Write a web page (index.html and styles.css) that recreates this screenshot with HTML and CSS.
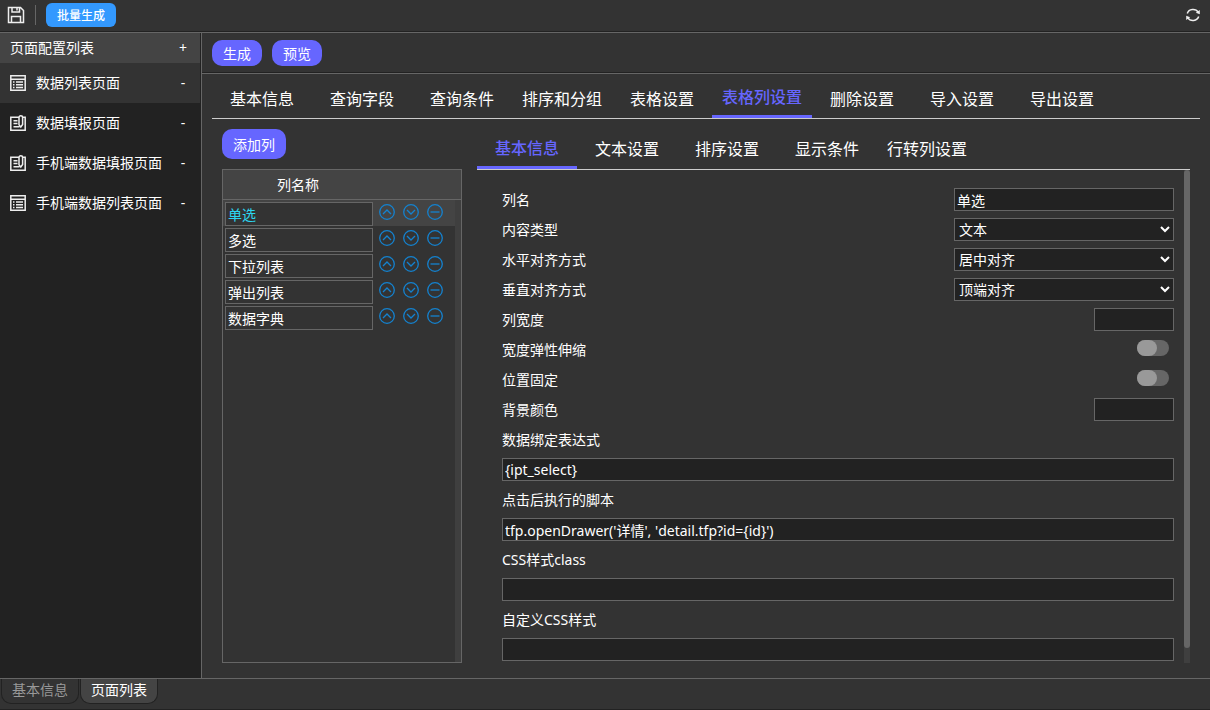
FILE: index.html
```html
<!DOCTYPE html>
<html lang="zh-CN">
<head>
<meta charset="utf-8">
<title>页面列表</title>
<link rel="stylesheet" href="styles.css">
</head>
<body>
<svg class="sprite" aria-hidden="true">
  <symbol id="i-list" viewBox="0 0 16 16"><path d="M.8.8h14.400v14.400H.8zM1 4.200h14M3 7h1.500M6 7h7M3 9.700h1.500M6 9.700h7M3 12.400h1.500M6 12.400h7"/></symbol>
  <symbol id="i-form" viewBox="0 0 16 16"><path d="M8.500 2.300H.8v12.900h14.400V2.300h-2M3.500 5.800h4M3.500 8.500h4M3.500 11.700h6M9 10V2.500Q9 .8 10.800.8T12.600 2.500V9.500L10.800 12L9 10"/></symbol>
  <symbol id="i-up" viewBox="0 0 16 16"><circle cx="8" cy="8" r="7.300"/><path d="M4 10l4-4 4 4"/></symbol>
  <symbol id="i-down" viewBox="0 0 16 16"><circle cx="8" cy="8" r="7.300"/><path d="M4 6l4 4 4-4"/></symbol>
  <symbol id="i-minus" viewBox="0 0 16 16"><circle cx="8" cy="8" r="7.300"/><path d="M3.500 8h9"/></symbol>
</svg>
<header class="topbar">
  <button class="icon-btn save" aria-label="保存"><svg viewBox="0 0 18 18"><path d="M1.500 1.500h12l3 3v12h-15zM5 1.500v4.500h7.500v-4.500M10 2v2.500M4.500 16.500v-6h9v6"/></svg></button>
  <span class="divider"></span>
  <button class="batch">批量生成</button>
  <button class="icon-btn refresh" aria-label="刷新"><svg viewBox="0 0 16 16"><path d="M2.300 6.500a6 5.500 0 0 1 10.900-1.300M13.700 9.500a6 5.500 0 0 1-10.900 1.300"/><path class="solid" d="M14.800 3v4.200l-4-1.400zM1.200 13V8.800l4 1.400z"/></svg></button>
</header>
<div class="body">
  <aside class="sidebar">
    <div class="side-head"><span>页面配置列表</span><button class="mark" aria-label="添加页面">+</button></div>
    <ul class="pages">
      <li class="page current"><svg class="page-icon"><use href="#i-list"/></svg><a href="#">数据列表页面</a><button class="mark">-</button></li>
      <li class="page"><svg class="page-icon"><use href="#i-form"/></svg><a href="#">数据填报页面</a><button class="mark">-</button></li>
      <li class="page"><svg class="page-icon"><use href="#i-form"/></svg><a href="#">手机端数据填报页面</a><button class="mark">-</button></li>
      <li class="page"><svg class="page-icon"><use href="#i-list"/></svg><a href="#">手机端数据列表页面</a><button class="mark">-</button></li>
    </ul>
  </aside>
  <main class="main">
    <div class="actions"><button class="pill">生成</button><button class="pill">预览</button></div>
    <div class="content">
      <nav class="tabs">
        <button class="tab">基本信息</button><button class="tab">查询字段</button><button class="tab">查询条件</button><button class="tab">排序和分组</button><button class="tab">表格设置</button><button class="tab active">表格列设置</button><button class="tab">删除设置</button><button class="tab">导入设置</button><button class="tab">导出设置</button>
      </nav>
      <div class="columns">
        <section class="left">
          <button class="pill add">添加列</button>
          <div class="col-panel">
            <div class="col-head"><span>列名称</span></div>
            <ul class="col-list">
              <li class="col selected"><input aria-label="列名称" value="单选"><button aria-label="上移"><svg><use href="#i-up"/></svg></button><button aria-label="下移"><svg><use href="#i-down"/></svg></button><button aria-label="删除"><svg><use href="#i-minus"/></svg></button></li>
              <li class="col"><input aria-label="列名称" value="多选"><button aria-label="上移"><svg><use href="#i-up"/></svg></button><button aria-label="下移"><svg><use href="#i-down"/></svg></button><button aria-label="删除"><svg><use href="#i-minus"/></svg></button></li>
              <li class="col"><input aria-label="列名称" value="下拉列表"><button aria-label="上移"><svg><use href="#i-up"/></svg></button><button aria-label="下移"><svg><use href="#i-down"/></svg></button><button aria-label="删除"><svg><use href="#i-minus"/></svg></button></li>
              <li class="col"><input aria-label="列名称" value="弹出列表"><button aria-label="上移"><svg><use href="#i-up"/></svg></button><button aria-label="下移"><svg><use href="#i-down"/></svg></button><button aria-label="删除"><svg><use href="#i-minus"/></svg></button></li>
              <li class="col"><input aria-label="列名称" value="数据字典"><button aria-label="上移"><svg><use href="#i-up"/></svg></button><button aria-label="下移"><svg><use href="#i-down"/></svg></button><button aria-label="删除"><svg><use href="#i-minus"/></svg></button></li>
            </ul>
          </div>
        </section>
        <section class="right">
          <nav class="tabs sub">
            <button class="tab active">基本信息</button><button class="tab">文本设置</button><button class="tab">排序设置</button><button class="tab">显示条件</button><button class="tab">行转列设置</button>
          </nav>
          <div class="form-wrap">
            <form class="form">
              <div class="row"><label for="name">列名</label><input class="field" id="name" value="单选"></div>
              <div class="row"><label for="type">内容类型</label><select class="field" id="type"><option>文本</option></select></div>
              <div class="row"><label for="halign">水平对齐方式</label><select class="field" id="halign"><option>居中对齐</option></select></div>
              <div class="row"><label for="valign">垂直对齐方式</label><select class="field" id="valign"><option>顶端对齐</option></select></div>
              <div class="row"><label for="width">列宽度</label><input class="field short" id="width"></div>
              <div class="row"><label for="flex">宽度弹性伸缩</label><input class="toggle" type="checkbox" id="flex"></div>
              <div class="row"><label for="fixed">位置固定</label><input class="toggle" type="checkbox" id="fixed"></div>
              <div class="row"><label for="bg">背景颜色</label><input class="field short" id="bg"></div>
              <div class="row"><label for="bind">数据绑定表达式</label></div>
              <div class="row"><input class="field wide" id="bind" value="{ipt_select}"></div>
              <div class="row"><label for="script">点击后执行的脚本</label></div>
              <div class="row"><input class="field wide" id="script" value="tfp.openDrawer('详情', 'detail.tfp?id={id}')"></div>
              <div class="row"><label for="cls">CSS样式class</label></div>
              <div class="row"><input class="field wide" id="cls"></div>
              <div class="row"><label for="css">自定义CSS样式</label></div>
              <div class="row"><input class="field wide" id="css"></div>
            </form>
            <div class="track"><div class="thumb"></div></div>
          </div>
        </section>
      </div>
    </div>
  </main>
</div>
<footer class="footer"><button class="foot-tab">基本信息</button><button class="foot-tab active">页面列表</button></footer>
</body>
</html>
```
FILE: styles.css
```css
* { box-sizing: border-box; }

body {
  margin: 0;
  height: 100vh;
  display: flex;
  flex-direction: column;
  overflow: hidden;
  background: #333;
  color: #fff;
  font: 14px/20px "Noto Sans", "Noto Sans CJK SC", sans-serif;
}

button, input, select { font: inherit; color: inherit; }
button { margin: 0; padding: 0; border: 0; background: none; cursor: pointer; }
ul { margin: 0; padding: 0; list-style: none; }
a { color: inherit; text-decoration: none; }
svg { display: block; fill: none; stroke: currentColor; }
.sprite { position: absolute; width: 0; height: 0; }

/* top bar */
.topbar {
  display: flex;
  align-items: center;
  height: 33px;
  padding: 0 9px 2px 7px;
  border-bottom: 1px solid #666;
  box-shadow: inset 0 -1px #222;
}
.icon-btn { color: #eee; }
.save svg { width: 18px; height: 18px; stroke-width: 1.5; }
.divider { width: 1px; height: 20px; margin: 0 10px; background: #666; }
.batch {
  width: 70px;
  height: 24px;
  padding-top: 2px;
  border-radius: 6px;
  background: #39f;
  font-size: 12px;
  font-weight: 500;
}
.refresh { margin-left: auto; }
.refresh svg { width: 16px; height: 16px; stroke-width: 1.5; }
.refresh .solid { fill: currentColor; stroke: none; }

.body { flex: 1; display: flex; min-height: 0; }

/* sidebar */
.sidebar {
  flex: none;
  width: 202px;
  border-right: 1px solid #666;
  padding-right: 1px;
  background: #222;
}
.side-head {
  display: flex;
  align-items: center;
  justify-content: space-between;
  height: 30px;
  padding: 0 10px;
  background: #444;
}
.page {
  display: flex;
  align-items: center;
  gap: 10px;
  height: 40px;
  padding: 0 10px;
}
.page.current { background: #333; }
.page-icon { width: 16px; height: 16px; color: #eee; stroke-width: 1.5; }
.page a { flex: 1; }
.mark { width: 14px; text-align: center; }

/* main area */
.main { flex: 1; display: flex; flex-direction: column; min-width: 0; }
.actions {
  display: flex;
  gap: 10px;
  height: 41px;
  padding: 7px 10px;
  border-bottom: 1px solid #666;
  box-shadow: inset 0 -1px #222;
}
.pill {
  width: 50px;
  height: 26px;
  padding-top: 1px;
  border-radius: 10px;
  background: #66f;
}
.pill.add { flex: none; width: 64px; height: 30px; }
.content {
  flex: 1;
  display: flex;
  flex-direction: column;
  min-height: 0;
  padding: 5px 10px 15px;
}
.tabs { flex: none; display: flex; height: 40px; border-bottom: 1px solid #ccc; }
.tabs.sub { height: 41px; }
.tab { width: 100px; font-size: 16px; }
.tab.active { border-bottom: 3px solid #66f; color: #66f; font-weight: 500; }

.columns {
  flex: 1;
  display: flex;
  gap: 15px;
  min-height: 0;
  padding: 10px 10px 0;
}
.left { flex: none; display: flex; flex-direction: column; gap: 10px; width: 240px; }
.col-panel {
  flex: 1;
  display: flex;
  flex-direction: column;
  border: 1px solid #666;
}
.col-head {
  height: 30px;
  border-bottom: 1px solid #666;
  background: #444;
  line-height: 30px;
}
.col-head span { display: block; width: 150px; text-align: center; }
.col-list { flex: 1; border-right: 6px solid #3f3f3f; }
.col { display: flex; gap: 8px; height: 26px; padding: 2px 2px 0; }
.col.selected { background: #444; }
.col input {
  width: 148px;
  height: 24px;
  padding: 0 2px;
  border: 1px solid #666;
  background: #333;
}
.col.selected input { color: #2cd5f0; }
.col button { width: 16px; height: 20px; color: #1482cf; }
.col svg { width: 16px; height: 16px; stroke-width: 1.3; }
.col input + button { margin-left: -2px; }

.right { flex: 1; display: flex; flex-direction: column; min-width: 0; }
.form-wrap { flex: 1; display: flex; min-height: 0; }
.form {
  flex: 1;
  min-width: 0;
  overflow-y: auto;
  padding: 15px 10px 0 25px;
  scrollbar-width: none;
}
.row { display: flex; align-items: center; justify-content: space-between; height: 30px; }
.field {
  width: 220px;
  height: 23px;
  margin: 0 0 1px;
  padding: 0 2px;
  border: 1px solid #666;
  border-radius: 0;
  background: #222;
}
select.field { padding: 0; }
.field.short { width: 80px; }
.field.wide { width: 100%; }
.toggle {
  appearance: none;
  width: 32px;
  height: 16px;
  margin: 0 5px 4px 0;
  border-radius: 8px;
  background: #666;
}
.toggle::before {
  content: "";
  display: block;
  width: 20px;
  height: 16px;
  border-radius: 8px;
  background: #999;
}
.toggle:checked::before { margin-left: auto; background: #66f; }
.track { width: 6px; background: #3f3f3f; }
.thumb { height: 97%; border-radius: 3px; background: #666; }

/* bottom tabs */
.footer {
  display: flex;
  align-items: flex-start;
  gap: 1px;
  height: 32px;
  padding: 0 1px;
  border-top: 1px solid #666;
  border-bottom: 1px solid #222;
}
.foot-tab {
  width: 78px;
  height: 25px;
  padding-bottom: 2px;
  border: 1px solid #222;
  border-top: 0;
  border-radius: 0 0 10px 10px;
  color: #999;
}
.foot-tab.active { background: #444; color: #fff; }
```
